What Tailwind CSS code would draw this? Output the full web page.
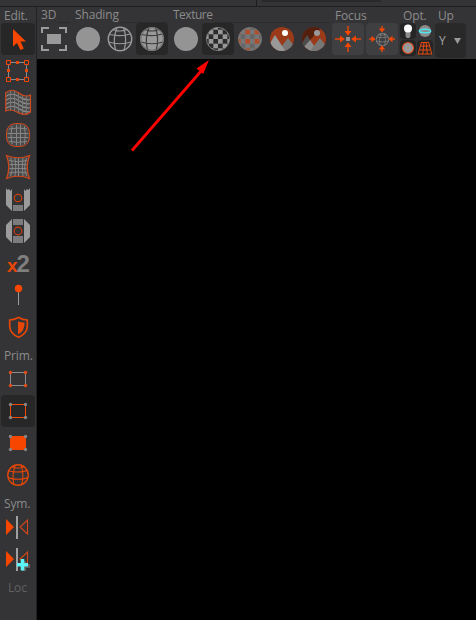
<!DOCTYPE html>
<html lang="en">
<head>
<meta charset="utf-8">
<title>UV Editor</title>
<script src="https://cdn.jsdelivr.net/npm/@tailwindcss/browser@4"></script>
</head>
<body class="w-[476px] h-[620px] overflow-hidden bg-[#343436] flex flex-col text-[12px] tracking-[-0.15px] text-[#8b8b8b] font-['Open_Sans','Noto_Sans',sans-serif]">
<svg class="absolute size-0">
  <defs>
    <symbol id="globe" viewBox="0 0 32 32">
      <g fill="none" stroke="currentColor" stroke-width="1.200">
        <circle cx="16" cy="16" r="11.700" stroke-width="1.500"/>
        <path d="M13 4.500Q8.500 16 11.500 27M19.500 4.500Q23.500 16 20 27.500M5.500 11.500Q16 14 26.500 11M4.500 19Q16 22.500 27.500 19M9 6.500Q16 9.500 23 6.500"/>
      </g>
    </symbol>
    <pattern id="chk" x="16" y="16" width="9.334" height="9.334" patternUnits="userSpaceOnUse">
      <rect width="9.334" height="9.334" fill="#2b2b2b"/>
      <path fill="#979797" d="M0 0h4.667v4.667H0zM4.667 4.667h4.667v4.667H4.667z"/>
    </pattern>
    <pattern id="chkOff" x="11.300" y="6.700" width="9.334" height="9.334" patternUnits="userSpaceOnUse">
      <rect width="9.334" height="9.334" fill="#777"/>
      <path fill="#b04e2c" d="M0 0h4.667v4.667H0z"/>
      <path fill="#666" d="M4.667 4.667h4.667v4.667H4.667z"/>
    </pattern>
    <clipPath id="disc"><circle cx="16" cy="16" r="12"/></clipPath>
    <clipPath id="wave"><path d="M3.500 5.500Q10 .5 16.500 5.500T29 8V25.500Q23 30.500 16 26T3.500 24.500Z"/></clipPath>
  </defs>
</svg>

<!-- Top strip -->
<div class="h-[6px] shrink-0 flex">
  <div class="w-[257px] border-r border-[#1c1c1d]"></div>
  <div class="ml-1 w-[120px] h-[2px] bg-[#29292a] rounded-b"></div>
</div>
<div class="h-px shrink-0 bg-[#1f1f20]"></div>

<div class="flex flex-1 min-h-0">
  <!-- Left tools -->
  <aside class="w-[37px] shrink-0 border-r border-[#222223] pl-[1px] flex flex-col">
    <div class="h-[16px] shrink-0 pl-[3px] leading-[17px]">Edit.</div>
    <div class="w-[34px] h-8 shrink-0 rounded bg-[#272727] pl-px"><svg class="size-8" viewBox="0 0 32 32"><path fill="#f74600" d="M11 6L11 23.500L15 20L18.500 27L21.800 25.500L18.500 18.500H24Z"/></svg></div>
    <svg class="size-8 shrink-0 ml-px" viewBox="0 0 32 32"><path d="M6.500 7.500h18v17h-18z" fill="none" stroke="#8b8b8b"/><g fill="#343436" stroke="#f74600" stroke-width="1"><path d="M4.500 5.500h4v4h-4zM22.500 5.500h4v4h-4zM4.500 22.500h4v4h-4zM22.500 22.500h4v4h-4z"/></g><path fill="#e64708" d="M14 6h3v3h-3zM14 23h3v3h-3zM5 14h3v3H5zM23 14h3v3h-3z"/></svg>
    <svg class="size-8 shrink-0 ml-px" viewBox="0 0 32 32"><g clip-path="url(#wave)"><path d="M3 3h26v26H3z" fill="#4b4b4c"/><path d="M3.500 9.500Q10 5 16.500 9.500T29 12.500M3.500 13.500Q10 9 16.500 13.500T29 16.500M3.500 17.500Q10 13 16.500 17.500T29 20.500M3.500 21.500Q10 17 16.500 21.500T29 24.500" fill="none" stroke="#8d8d8d" stroke-width="1.200"/><path d="M8.500 3v26M12.500 3v26M16.500 3v26M20.500 3v26M24.500 3v26" stroke="#777"/></g><path d="M3.700 5.700Q10 .7 16.500 5.700T28.500 8V25Q23 29.500 16 25.500T3.700 24Z" fill="none" stroke="#d34719" stroke-width="1.100"/></svg>
    <svg class="size-8 shrink-0 ml-px" viewBox="0 0 32 32"><rect x="4.500" y="4.500" width="23" height="23" rx="9" fill="#4b4b4c" stroke="#d34719"/><path d="M10 7Q8 16 10 25M14.500 5.500V26.500M18.500 5.500V26.500M22.500 7Q24 16 22.500 25M7 10Q16 8 25 10M5.500 14.500H26.500M5.500 18.500H26.500M7 22.500Q16 24 25 22.500" fill="none" stroke="#858585"/></svg>
    <svg class="size-8 shrink-0 ml-px" viewBox="0 0 32 32"><path d="M4.500 4.500Q16 9 27.500 4.500Q23 16 27.500 27.500Q16 23 4.500 27.500Q9 16 4.500 4.500Z" fill="#4b4b4c" stroke="#d34719" stroke-width="1.200"/><path d="M8.500 7Q12 16 8.500 25M13 7Q14.500 16 13 25M16.500 7v18M21 7Q19.500 16 21 25M24.500 7Q21 16 24.500 25M7 9.500Q16 12 25 9.500M7.500 13.500H24.500M7.500 17.500H24.500M7 22Q16 20 25 22" fill="none" stroke="#858585"/></svg>
    <svg class="size-8 shrink-0 ml-px" viewBox="0 0 32 32"><path fill="#9b9b9b" d="M4 5l1.500 2L7 6l1.500 2L10 6v22L4 22zM28 5l-1.500 2L25 6l-1.500 2L22 6v22l6-6z"/><path fill="#7c7c7c" d="M11 22h10v6H11z"/><circle cx="16" cy="15" r="3.700" fill="none" stroke="#c93f0c" stroke-width="1.200"/></svg>
    <svg class="size-8 shrink-0 ml-px" viewBox="0 0 32 32"><path fill="#9b9b9b" d="M10 4v24L4 22V10zM22 4v24l6-6V10z"/><path fill="#7c7c7c" d="M11 4h10v6H11zM11 21h10v7H11z"/><circle cx="16" cy="16" r="3.800" fill="none" stroke="#c93f0c" stroke-width="1.200"/></svg>
    <div class="h-8 shrink-0 flex items-baseline pl-[6px] font-['Liberation_Sans',sans-serif] font-bold leading-[33px] tracking-normal"><span class="text-[19px] text-[#e64708]">x</span><span class="text-[24px] text-[#7f7f7f] -ml-px">2</span></div>
    <svg class="size-8 shrink-0 ml-px" viewBox="0 0 32 32"><path d="M16.500 9v17" stroke="#9b9b9b"/><circle cx="16.500" cy="9.500" r="3.700" fill="#f74600"/></svg>
    <svg class="size-8 shrink-0 ml-px" viewBox="0 0 32 32"><path d="M16.500 6.500Q21 9 25.300 9V15.500Q25 22.500 16.500 26.300Q8 22.500 7.700 15.500V9Q12 9 16.500 6.500Z" fill="none" stroke="#e64708" stroke-width="1.700"/><path fill="#e64708" d="M16 10.500Q19 11.500 22.500 11.500Q23 20 16 23.500Z"/></svg>

    <div class="h-5 shrink-0 pl-[3px] pt-[4px] leading-[17px]">Prim.</div>
    <svg class="size-8 shrink-0 ml-px" viewBox="0 0 32 32"><path d="M8.500 9.500h15v13h-15z" fill="none" stroke="#8b8b8b"/><g fill="#e04d17"><circle cx="8.500" cy="9.500" r="1.700"/><circle cx="23.500" cy="9.500" r="1.700"/><circle cx="8.500" cy="22.500" r="1.700"/><circle cx="23.500" cy="22.500" r="1.700"/></g></svg>
    <div class="w-[34px] h-8 shrink-0 rounded bg-[#272727] pl-px"><svg class="size-8" viewBox="0 0 32 32"><path d="M8.500 9.500h15v13h-15z" fill="none" stroke="#f74600"/><g fill="#858585"><circle cx="8.500" cy="9.500" r="1.700"/><circle cx="23.500" cy="9.500" r="1.700"/><circle cx="8.500" cy="22.500" r="1.700"/><circle cx="23.500" cy="22.500" r="1.700"/></g></svg></div>
    <svg class="size-8 shrink-0 ml-px" viewBox="0 0 32 32"><path d="M8 9h16v14H8z" fill="#f74600"/><g fill="#858585"><circle cx="8.500" cy="9.500" r="1.700"/><circle cx="23.500" cy="9.500" r="1.700"/><circle cx="8.500" cy="22.500" r="1.700"/><circle cx="23.500" cy="22.500" r="1.700"/></g></svg>
    <div class="size-8 shrink-0 ml-px flex items-center justify-center text-[#e64708]"><svg class="size-[28px]"><use href="#globe"/></svg></div>

    <div class="h-5 shrink-0 pl-[3px] pt-[4px] leading-[17px]">Sym.</div>
    <svg class="size-8 shrink-0 ml-px" viewBox="0 0 32 32"><path fill="#f74600" d="M4 8l8 8-8 8z"/><path fill="#a0a0a0" d="M14 5h2v23h-2z"/><path d="M25.500 9v14L18 16z" fill="none" stroke="#d34719" stroke-width="1.100"/></svg>
    <svg class="size-8 shrink-0 ml-px" viewBox="0 0 32 32"><path fill="#f74600" d="M4 8l8 8-8 8z"/><path fill="#a0a0a0" d="M14 5h2v23h-2z"/><path d="M25.500 9v14L18 16z" fill="none" stroke="#d34719" stroke-width="1.100"/><path fill="#626262" d="M20 18h4v3h4v4h-4v3h-4z"/><path fill="#5cf4f6" d="M18.700 16h3.600v4H26v3.500h-3.700v4h-3.600v-4H15V20h3.700z"/></svg>
    <div class="h-5 shrink-0 pl-[7px] pt-[4px] leading-[17px] text-[#626263]">Loc</div>
  </aside>

  <main class="flex-1 min-w-0 flex flex-col">
    <!-- View toolbar -->
    <header class="h-[52px] shrink-0 flex gap-[2px] pl-px">
      <section class="w-8">
        <div class="h-4 pl-[3px] leading-[17px] flex items-end">3D<i class="flex-1 ml-[2px] h-px bg-[#2b2b2c]"></i></div>
        <svg class="size-8" viewBox="0 0 32 32"><path d="M4 10V5h7M21 5h7v5M28 22v5h-7M11 27H4v-5" fill="none" stroke="#9b9b9b" stroke-width="2"/><path fill="#999" d="M9 11h14v10H9z"/></svg>
      </section>
      <section class="w-24">
        <div class="h-4 pl-[3px] leading-[17px] flex items-end">Shading<i class="flex-1 ml-[2px] h-px bg-[#2b2b2c]"></i></div>
        <div class="flex text-[#999]">
          <svg class="size-8" viewBox="0 0 32 32"><circle cx="16" cy="16" r="12" fill="#949494"/></svg>
          <svg class="size-8"><use href="#globe"/></svg>
          <svg class="size-8 rounded bg-[#272727]" viewBox="0 0 32 32"><circle cx="16" cy="16" r="12" fill="#999"/><path d="M13 4.500Q8.500 16 11.500 27M19.500 4.500Q23.500 16 20 27.500M5.500 11.500Q16 14 26.500 11M4.500 19Q16 22.500 27.500 19M9 6.500Q16 9.500 23 6.500" fill="none" stroke="#3c3c3c" stroke-width="1.200"/><circle cx="16" cy="16" r="11.300" fill="none" stroke="#6a6a6a"/></svg>
        </div>
      </section>
      <section class="w-40">
        <div class="h-4 pl-[3px] leading-[17px] flex items-end"><span class="tracking-[-0.5px]">Texture</span><i class="flex-1 ml-[2px] h-px bg-[#2b2b2c]"></i></div>
        <div class="flex">
          <svg class="size-8" viewBox="0 0 32 32"><circle cx="16" cy="16" r="12" fill="#949494"/></svg>
          <svg class="size-8 rounded bg-[#272727]" viewBox="0 0 32 32"><circle cx="16" cy="16" r="11.600" fill="url(#chk)" stroke="#858585" stroke-width=".8"/></svg>
          <svg class="size-8" viewBox="0 0 32 32"><circle cx="16" cy="16" r="11.600" fill="url(#chkOff)" stroke="#777" stroke-width=".8"/></svg>
          <svg class="size-8" viewBox="0 0 32 32"><g clip-path="url(#disc)"><path fill="#9a3a19" d="M4 4h24v24H4z"/><path fill="#777" d="M12 28l10-13 8 10v3z"/><path fill="#999" d="M3 22l6-10 11 17H3z"/></g><circle cx="19" cy="10" r="3" fill="#fff"/></svg>
          <svg class="size-8" viewBox="0 0 32 32"><g clip-path="url(#disc)"><path fill="#9a3a19" d="M4 4h24v24H4z"/><path fill="#8b8b8b" d="M3 22l6-10 11 17H3z"/><path fill="#777" d="M12 28l10-13 8 10v3z"/><path fill="#000" fill-opacity=".45" d="M4 4h20L4 26z"/></g><circle cx="19" cy="10" r="3" fill="#999"/></svg>
        </div>
      </section>
      <section class="w-[66px]">
        <div class="h-4 pl-[3px] leading-[17px]">Focus</div>
        <div class="flex gap-[2px]">
          <svg class="size-8 rounded bg-[#3f3f41]" viewBox="0 0 32 32"><path d="M16 3v5M16 29v-5M3 16h5M29 16h-5" stroke="#e64708" stroke-width="1.500"/><path fill="#f74600" d="M12.500 8h7L16 12.800zM12.500 24h7L16 19.200zM8 12.500v7l4.800-3.500zM24 12.500v7L19.200 16z"/><path fill="#909090" d="M14 14h4v4h-4z"/></svg>
          <div class="size-8 rounded bg-[#3f3f41] grid text-[#8b8b8b]"><svg class="size-[17px] place-self-center col-start-1 row-start-1"><use href="#globe"/></svg><svg class="size-8 col-start-1 row-start-1" viewBox="0 0 32 32"><path d="M16 3v3M16 29v-3M3 16h3M29 16h-3" stroke="#e64708" stroke-width="1.500"/><path fill="#f74600" d="M12.800 5.500h6.400L16 9.500zM12.800 26.500h6.400L16 22.500zM5.500 12.800v6.400l4-3.200zM26.500 12.800v6.400l-4-3.200z"/></svg></div>
        </div>
      </section>
      <section class="w-[33px]">
        <div class="h-4 pl-[3px] leading-[17px]">Opt.</div>
        <div class="grid grid-cols-2 gap-px">
          <svg class="size-4 rounded-sm bg-[#252526]" viewBox="0 0 16 16"><path fill="#8b8b8b" d="M5.500 8h5v5l-1 2h-3l-1-2z"/><circle cx="8" cy="5.500" r="4" fill="#fff"/></svg>
          <svg class="size-4" viewBox="0 0 16 16"><circle cx="8" cy="8" r="6" fill="#8c8c8c"/><ellipse cx="8" cy="8" rx="5.700" ry="1.800" fill="#8c8c8c" stroke="#4fe5ee" stroke-width="1.400"/></svg>
          <svg class="size-4 rounded-sm bg-[#252526]" viewBox="0 0 16 16"><circle cx="8" cy="8" r="5.500" fill="#999" stroke="#dc4b18" stroke-width="1.200"/></svg>
          <svg class="size-4 rounded-sm bg-[#252526]" viewBox="0 0 16 16"><path d="M4.500 2.500h7M3.500 6h9M2.500 10h11M1 14h14M4.500 2L1 14.500M7 2L5.700 14.500M9 2l1.300 12.500M11.500 2L15 14.500" fill="none" stroke="#e34a10"/></svg>
        </div>
      </section>
      <section class="w-[31px]">
        <div class="h-4 pl-[3px] leading-[17px]">Up</div>
        <div class="h-[35px] rounded-sm bg-[#29292a] flex items-center pl-1 gap-[8px] text-[#a5a5a5]"><span>Y</span><svg class="w-[7px] h-[6px]" viewBox="0 0 7 6"><path fill="#999" d="M0 0h7L3.500 6z"/></svg></div>
      </section>
    </header>
    <!-- Viewport -->
    <div class="flex-1 bg-black">
      <svg class="w-[200px] h-[100px]" viewBox="37 59 200 100"><path d="M132 150.500L202 70" stroke="#f00" stroke-width="2.800"/><path fill="#f00" d="M209 60l-5.800 14-3-2.700-3.700-2.800z"/></svg>
    </div>
  </main>
</div>
</body>
</html>
